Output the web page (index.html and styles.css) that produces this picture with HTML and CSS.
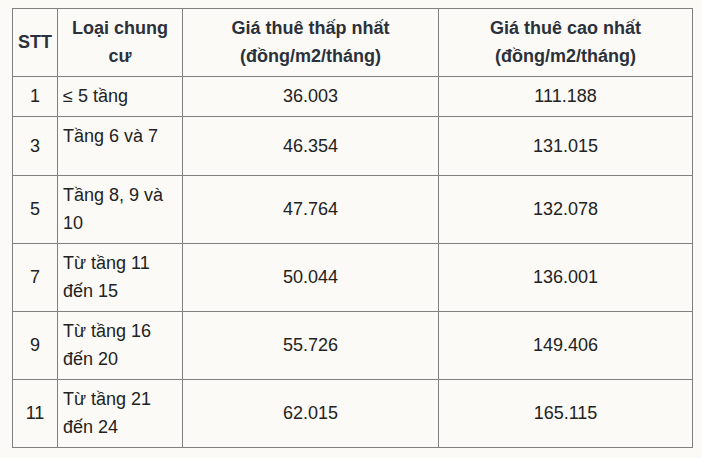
FILE: index.html
```html
<!DOCTYPE html>
<html lang="vi">
<head>
<meta charset="utf-8">
<title>Giá thuê chung cư</title>
<link rel="stylesheet" href="styles.css">
</head>
<body>
<table class="price-table">
  <colgroup>
    <col class="c-stt">
    <col class="c-type">
    <col class="c-min">
    <col class="c-max">
  </colgroup>
  <thead>
    <tr>
      <th>STT</th>
      <th>Loại chung cư</th>
      <th>Giá thuê thấp nhất<br>(đồng/m2/tháng)</th>
      <th>Giá thuê cao nhất<br>(đồng/m2/tháng)</th>
    </tr>
  </thead>
  <tbody>
    <tr>
      <td class="num">1</td>
      <td class="type">≤ 5 tầng</td>
      <td class="num">36.003</td>
      <td class="num">111.188</td>
    </tr>
    <tr>
      <td class="num">3</td>
      <td class="type extra">Tầng 6 và 7</td>
      <td class="num">46.354</td>
      <td class="num">131.015</td>
    </tr>
    <tr>
      <td class="num">5</td>
      <td class="type">Tầng 8, 9 và 10</td>
      <td class="num">47.764</td>
      <td class="num">132.078</td>
    </tr>
    <tr>
      <td class="num">7</td>
      <td class="type">Từ tầng 11 đến 15</td>
      <td class="num">50.044</td>
      <td class="num">136.001</td>
    </tr>
    <tr>
      <td class="num">9</td>
      <td class="type">Từ tầng 16 đến 20</td>
      <td class="num">55.726</td>
      <td class="num">149.406</td>
    </tr>
    <tr>
      <td class="num">11</td>
      <td class="type">Từ tầng 21 đến 24</td>
      <td class="num">62.015</td>
      <td class="num">165.115</td>
    </tr>
  </tbody>
</table>
</body>
</html>
```

FILE: styles.css
```css
html, body {
  margin: 0;
  background: #fbfaf7;
}

body {
  padding: 8px 10px 0 12px;
  font-family: "Liberation Sans", Arial, sans-serif;
  font-size: 18px;
  line-height: 28px;
  color: #222;
}

.price-table {
  border-collapse: collapse;
  width: 680px;
  table-layout: fixed;
}

.c-stt { width: 45px; }
.c-type { width: 125px; }
.c-min { width: 256px; }
.c-max { width: 254px; }

.price-table th,
.price-table td {
  border: 1px solid #808080;
  padding: 5px 5px 6px;
  vertical-align: middle;
}

.price-table th {
  font-weight: bold;
  text-align: center;
  color: #2b313a;
}

.num {
  text-align: center;
}

.type {
  text-align: left;
}

.type.extra {
  padding-bottom: 25px;
}
```
